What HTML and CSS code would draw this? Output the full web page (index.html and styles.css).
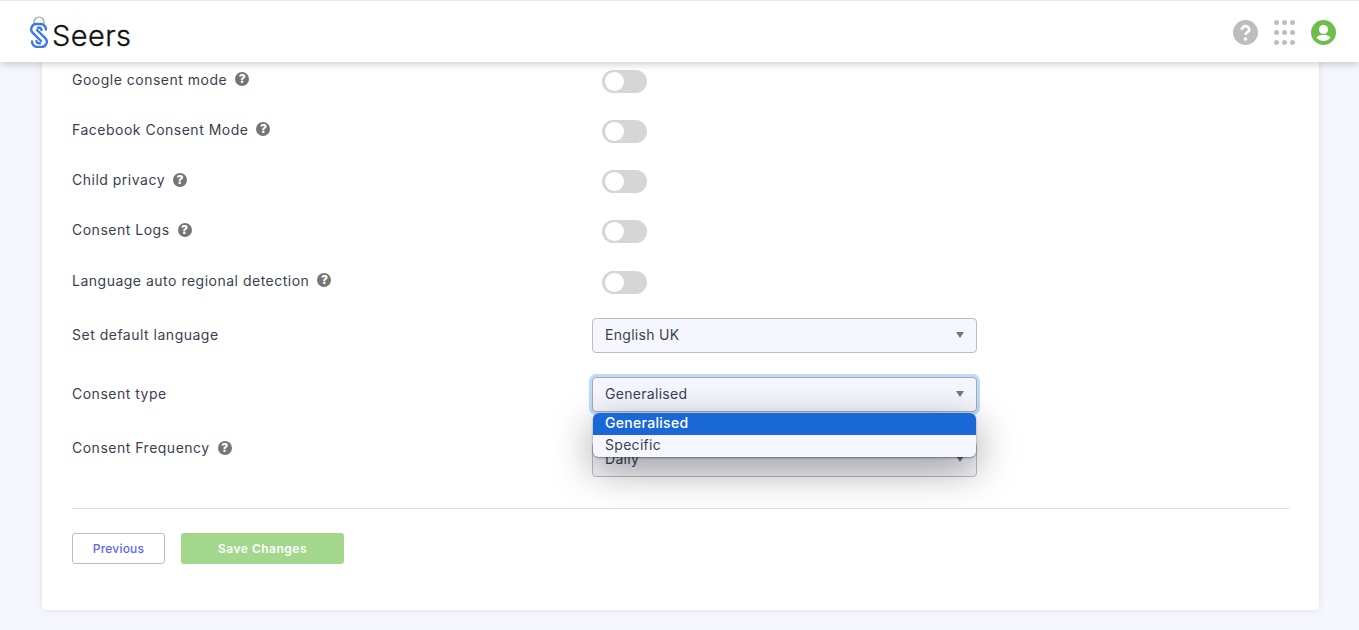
FILE: index.html
```html
<!DOCTYPE html>
<html lang="en">
<head>
<meta charset="utf-8">
<title>Seers</title>
<link rel="stylesheet" href="styles.css">
</head>
<body>
<header class="topbar">
  <a class="brand">
    <svg class="brand-icon" width="18" height="32" viewBox="0 0 18 32" fill="none">
      <path d="M4 8V6a5 5 0 0 1 10 0v2" stroke="#9a9a9a" stroke-width="1.2"/>
      <g stroke="#3b78e7" stroke-width="2.400" stroke-linecap="round">
        <path d="M16 13.500a5.500 5.500 0 0 0-5.500-5.500H6.500a5.200 5.200 0 0 0-3.700 8.900L11 25"/>
        <path d="M2 25.500A5.500 5.500 0 0 0 7.500 31h4a5.200 5.200 0 0 0 3.700-8.900L7 14"/>
        <path d="M11.500 14a2 2 0 0 0-2-2.200H8"/>
        <path d="M6.500 25a2 2 0 0 0 2 2.200H10"/>
      </g>
    </svg>
    <span class="brand-name">Seers</span>
  </a>
  <div class="top-actions">
    <svg class="top-help" width="25" height="25" viewBox="0 0 25 25">
      <circle cx="12.500" cy="12.500" r="12.500" fill="#bdbdbd"/>
      <path d="M8.800 9.800a3.700 3.700 0 0 1 7.400 0c0 2.600-3.700 2.700-3.700 5" fill="none" stroke="#fff" stroke-width="2.800"/>
      <circle cx="12.500" cy="19" r="1.800" fill="#fff"/>
    </svg>
    <svg class="top-grid" width="21" height="25" viewBox="0 0 21 25" fill="#bdbdbd">
      <circle cx="2.500" cy="2.500" r="2.500"/><circle cx="10.500" cy="2.500" r="2.500"/><circle cx="18.500" cy="2.500" r="2.500"/>
      <circle cx="2.500" cy="12.500" r="2.500"/><circle cx="10.500" cy="12.500" r="2.500"/><circle cx="18.500" cy="12.500" r="2.500"/>
      <circle cx="2.500" cy="22.500" r="2.500"/><circle cx="10.500" cy="22.500" r="2.500"/><circle cx="18.500" cy="22.500" r="2.500"/>
    </svg>
    <svg class="top-user" width="25" height="25" viewBox="0 0 25 25">
      <circle cx="12.500" cy="12.500" r="12.500" fill="#6cc04a"/>
      <circle cx="12.500" cy="9.500" r="4.500" fill="#fff"/>
      <path d="M5.500 17.500c1.500-2 4-2.500 7-2.500s5.500.5 7 2.500c-1.500 2.300-4 3.500-7 3.500s-5.500-1.200-7-3.500z" fill="#fff"/>
    </svg>
  </div>
</header>
<main class="page">
  <section class="card">
    <div class="row">
      <div class="label">Google consent mode <span class="hint">?</span></div>
      <div class="control"><span class="toggle"></span></div>
    </div>
    <div class="row">
      <div class="label">Facebook Consent Mode <span class="hint">?</span></div>
      <div class="control"><span class="toggle"></span></div>
    </div>
    <div class="row">
      <div class="label">Child privacy <span class="hint">?</span></div>
      <div class="control"><span class="toggle"></span></div>
    </div>
    <div class="row">
      <div class="label">Consent Logs <span class="hint">?</span></div>
      <div class="control"><span class="toggle"></span></div>
    </div>
    <div class="row">
      <div class="label">Language auto regional detection <span class="hint">?</span></div>
      <div class="control"><span class="toggle"></span></div>
    </div>
    <div class="row row-select row-lang">
      <div class="label">Set default language</div>
      <div class="control"><div class="select">English UK</div></div>
    </div>
    <div class="row row-select row-type">
      <div class="label">Consent type</div>
      <div class="control">
        <div class="select select-focus">Generalised</div>
        <ul class="menu">
          <li class="menu-item menu-active">Generalised</li>
          <li class="menu-item">Specific</li>
        </ul>
      </div>
    </div>
    <div class="row row-select row-freq">
      <div class="label label-freq">Consent Frequency <span class="hint">?</span></div>
      <div class="control control-freq"><div class="select">Daily</div></div>
    </div>
    <hr class="divider">
    <div class="actions">
      <button class="btn btn-prev">Previous</button>
      <button class="btn btn-save">Save Changes</button>
    </div>
  </section>
</main>
</body>
</html>
```

FILE: styles.css
```css
* { box-sizing: border-box; }
html, body { margin: 0; padding: 0; }
body {
  background: #f6f7fe;
  font-family: Inter, "Noto Sans", "Liberation Sans", sans-serif;
  color: #3a3f52;
  height: 630px;
  overflow: hidden;
}
.topbar {
  position: relative;
  z-index: 5;
  height: 62px;
  background: #fff;
  border-top: 1px solid #fbe3d8;
  box-shadow: 0 2px 8px rgba(0,0,0,.2);
  display: flex;
  align-items: center;
  justify-content: space-between;
  padding: 0 23px 0 30px;
}
.brand { display: flex; align-items: center; }
.brand-name {
  font-size: 29px;
  font-weight: 300;
  color: #111;
  margin: 8px 0 0 4px;
  letter-spacing: .4px;
  line-height: 40px;
  -webkit-text-stroke: .3px #111;
}
.top-actions { display: flex; align-items: center; gap: 16px; margin-top: 2px; }
.page { padding: 0 40px 0 42px; }
.card {
  background: #fff;
  border-radius: 0 0 4px 4px;
  box-shadow: 0 0 8px rgba(40,40,80,.12);
  height: 554px;
  margin-top: -6px;
  padding: 0 30px;
}
.row { display: flex; align-items: center; height: 50.250px; }
.label {
  width: 520px;
  font-size: 14px;
  letter-spacing: .5px;
  white-space: nowrap;
  display: flex;
  align-items: center;
  gap: 8px;
  padding-bottom: 4px;
}
.hint {
  width: 14px; height: 14px; border-radius: 50%;
  background: #757575; color: #fff;
  font-size: 12px; font-weight: 800; line-height: 14px; text-align: center;
  letter-spacing: 0;
}
.control { position: relative; width: 385px; }
.toggle {
  display: block;
  width: 45px; height: 23px;
  margin-left: 10px;
  background: #d6d6d6;
  border-radius: 12px;
  position: relative;
}
.toggle::after {
  content: "";
  position: absolute;
  left: 3px; top: 2px;
  width: 19px; height: 19px;
  border-radius: 50%;
  background: #fff;
}
.row-select .label { padding-bottom: 2px; }
.row-lang { height: 56.750px; }
.row-type { height: 61px; }
.row-freq { height: 74px; align-items: flex-start; }
.row-freq .label { padding-top: 14px; }
.control-freq { margin-top: 17px; }
.select {
  height: 35px;
  border: 1px solid #bdbdbd;
  border-radius: 4px;
  background: #f6f7fe;
  font-size: 14px;
  letter-spacing: .3px;
  line-height: 32px;
  padding-left: 12px;
  position: relative;
}
.select::after {
  content: "";
  position: absolute;
  right: 12px; top: 13px;
  border-left: 4px solid transparent;
  border-right: 4px solid transparent;
  border-top: 6px solid #757575;
}
.select-focus {
  border-color: #a9a9a9;
  box-shadow: 0 0 0 3px #bcdcfb;
}
.menu {
  position: absolute;
  z-index: 3;
  left: 1px; right: 1px; top: 36px;
  margin: 0; padding: 0;
  list-style: none;
  background: #f6f7fe;
  border-radius: 6px;
  overflow: hidden;
  box-shadow: 0 1px 2px rgba(0,0,0,.4);
}
.row-type .control::after {
  content: "";
  position: absolute;
  z-index: 2;
  left: 1px; right: 1px; top: 36px; height: 44px;
  border-radius: 6px;
  box-shadow: 0 12px 40px rgba(0,0,0,.4);
}
.menu-item { height: 22px; line-height: 20px; font-size: 14px; letter-spacing: .3px; padding-left: 12px; }
.menu-active { background: #1a68d6; color: #fff; font-weight: 500; }
.divider { border: 0; border-top: 1px solid #dedede; margin: 9px 0 0; }
.actions { display: flex; gap: 16px; margin-top: 24px; }
.btn { height: 31px; border-radius: 3px; font-family: inherit; font-size: 12px; font-weight: 500; padding: 0; letter-spacing: .2px; }
.btn-prev { width: 93px; background: #fff; border: 1px solid #bdbdbd; color: #5a67f2; }
.btn-save { width: 163px; background: #a3d78b; border: 0; color: #fff; font-weight: 600; letter-spacing: .5px; }
```
